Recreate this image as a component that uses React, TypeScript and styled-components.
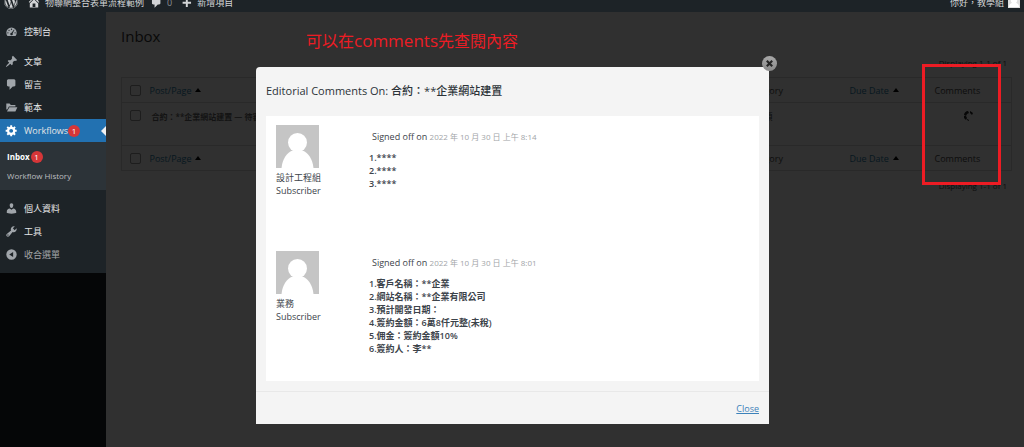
import React from 'react';
import styled, { createGlobalStyle } from 'styled-components';
import { FaWordpress } from 'react-icons/fa';

const GlobalStyle = createGlobalStyle`
  * { box-sizing: border-box; }
  body {
    margin: 0;
    background: #303030;
    color: #0d0d0d;
    font: 9px/13px "Open Sans", "Noto Sans CJK TC", sans-serif;
  }
  button, input { font: inherit; }
`;

const AdminBar = styled.header`
  display: flex;
  align-items: flex-end;
  height: 12px;
  padding: 0 4px;
  overflow: hidden;
  background: #1d2327;
  color: #d2d4d6;
`;

const BarItem = styled.a<{ $gap?: number; $end?: boolean }>`
  display: flex;
  align-items: center;
  flex: none;
  gap: 4px;
  height: 20px;
  margin-right: ${(p) => p.$gap ?? 8}px;
  margin-left: ${(p) => (p.$end ? 'auto' : '0')};
  color: inherit;
  text-decoration: none;
  white-space: nowrap;
`;

const Muted = styled.span`
  color: #8d9196;
`;

const Glyph = styled.svg<{ $size?: number }>`
  flex: none;
  width: ${(p) => p.$size ?? 13}px;
  height: ${(p) => p.$size ?? 13}px;
  fill: currentColor;
`;

const Layout = styled.div`
  display: flex;
  min-height: calc(100vh - 12px);
`;

const Sidebar = styled.nav`
  flex: none;
  width: 106px;
  background: #050607;
`;

const Menu = styled.ul`
  margin: 0;
  padding: 8px 0 7px;
  list-style: none;
  background: #1d2327;
`;

const MenuItem = styled.li<{ $spaced?: boolean }>`
  margin-top: ${(p) => (p.$spaced ? 7 : 0)}px;
`;

const MenuLink = styled.a<{ $active?: boolean; $quiet?: boolean }>`
  position: relative;
  display: flex;
  align-items: center;
  height: 23px;
  padding-left: 5px;
  gap: 6px;
  color: ${(p) => (p.$quiet ? '#a2a5a8' : '#e4e5e6')};
  background: ${(p) => (p.$active ? '#2271b1' : 'transparent')};
  text-decoration: none;
  white-space: nowrap;

  svg { color: ${(p) => (p.$active ? '#fff' : '#a0a5aa')}; }

  &::after {
    content: "";
    display: ${(p) => (p.$active ? 'block' : 'none')};
    position: absolute;
    right: 0;
    border: 5px solid transparent;
    border-right-color: #f0f0f1;
    border-left-width: 0;
  }
`;

const Label = styled.span`
  display: flex;
  align-items: center;
`;

const Count = styled.span`
  width: 12px;
  height: 12px;
  border-radius: 50%;
  background: #d63638;
  color: #fff;
  font-size: 8px;
  font-weight: 400;
  line-height: 12px;
  text-align: center;
`;

const SubMenu = styled.ul`
  margin: 0;
  padding: 5px 0 5px 7px;
  list-style: none;
  background: #2c3338;
`;

const SubLink = styled.a<{ $current?: boolean }>`
  display: flex;
  align-items: center;
  gap: 1px;
  height: 19px;
  font-size: 8px;
  color: ${(p) => (p.$current ? '#fff' : '#bcbfc1')};
  font-weight: ${(p) => (p.$current ? 700 : 400)};
  text-decoration: none;
`;

const Content = styled.main`
  flex: 1;
  min-width: 0;
  padding: 12px 12px 0 15px;
`;

const PageTitle = styled.h1`
  margin: 0;
  font-size: 15px;
  font-weight: 400;
  line-height: 24px;
  color: #090909;
`;

const Paging = styled.div`
  padding: 8px 5px;
  font-size: 8px;
  text-align: right;
`;

const InboxTable = styled.table`
  width: 100%;
  table-layout: fixed;
  border-collapse: collapse;
  border: 1px solid #292929;

  th, td {
    padding: 0;
    font-weight: 400;
    text-align: left;
    white-space: nowrap;
  }
  th { height: 25px; vertical-align: middle; }
  td { height: 43px; padding-top: 7px; vertical-align: top; }
  tr { border-bottom: 1px solid #292929; }
`;

const Tick = styled.input`
  display: block;
  appearance: none;
  width: 11px;
  height: 11px;
  margin: 0 0 0 8px;
  border: 1px solid #1d1d1d;
  border-radius: 2px;
`;

const SortLink = styled.a`
  display: inline-flex;
  align-items: center;
  gap: 4px;
  color: #07171f;
  text-decoration: none;

  &::after {
    content: "";
    border: 3px solid transparent;
    border-top-width: 0;
    border-bottom: 4px solid #000;
  }
`;

const PostTitle = styled.strong`
  padding-left: 2px;
  font-size: 8px;
  font-weight: 600;
  color: #131313;
`;

const Busy = styled(Glyph)`
  display: block;
  margin-left: 28px;
  color: #070707;
`;

const Note = styled.p`
  position: absolute;
  top: 29px;
  left: 306px;
  margin: 0;
  color: #ed1c24;
  font-size: 16px;
  line-height: 24px;
  white-space: nowrap;
`;

const NoteLatin = styled.span`
  font-size: 17px;
`;

const Marker = styled.div`
  position: absolute;
  top: 64px;
  right: 23px;
  width: 79px;
  height: 121px;
  border: 3px solid #ed1c24;
`;

const Dialog = styled.section`
  position: absolute;
  top: 67px;
  left: 25%;
  right: calc(25% - 1px);
  border-radius: 4px 4px 0 0;
  background: #f4f4f4;
  color: #3c434a;
`;

const DialogTitle = styled.h2`
  margin: 0;
  padding: 15px 10px 17px;
  color: #2c3338;
  font-size: 11px;
  font-weight: 500;
  line-height: 17px;
`;

const DismissButton = styled.button`
  position: absolute;
  top: -11px;
  right: -8px;
  display: grid;
  place-items: center;
  width: 15px;
  height: 15px;
  padding: 0;
  border: 0;
  border-radius: 50%;
  background: linear-gradient(#a8a8a8, #8a8a8a);
  color: #262626;
`;

const Comments = styled.div`
  margin: 0 10px;
  padding: 9px 10px 0;
  background: #fff;
`;

const Comment = styled.article<{ $last?: boolean }>`
  display: flex;
  gap: 49px;
  min-height: ${(p) => (p.$last ? 130 : 126)}px;
`;

const Author = styled.div`
  flex: none;
  width: 44px;
  white-space: nowrap;
`;

const Avatar = styled.svg`
  display: block;
  width: 43px;
  height: 43px;
  margin-bottom: 3px;
`;

const Signed = styled.p`
  margin: 0;
  padding: 5px 0 8px 3px;

  time {
    color: #a2a5a8;
    font-size: 8px;
  }
`;

const Lines = styled.div`
  font-weight: 600;
`;

const DialogFooter = styled.footer`
  margin-top: 10px;
  padding: 10px 10px 9px;
  border-top: 1px solid #e8e8e8;
  text-align: right;
  a { color: #3c82ba; }
`;

const paths = {
  home: 'M16 8.5l1.53 1.53-1.06 1.06L10 4.6l-6.47 6.49-1.06-1.06L10 2.5l4 4v-2h2v4zm-6-2.46l6 5.99V18H4v-5.97zM12 17v-5H8v5h4z',
  comment: 'M5 2h9q.82 0 1.41.59T16 4v7q0 .82-.59 1.41T14 13h-2l-5 5v-5H5q-.82 0-1.41-.59T3 11V4q0-.82.59-1.41T5 2z',
  plus: 'M17 9v3h-5v5H9v-5H4V9h5V4h3v5h5z',
  dashboard: 'M3.76 17h12.48A8 8 0 0 0 18 12a8 8 0 0 0-16 0c0 1.89.66 3.63 1.76 5zM10 5.5a1 1 0 1 1 0 2 1 1 0 0 1 0-2zM6.2 7.2a1 1 0 1 1 0 2 1 1 0 0 1 0-2zM4.5 11a1 1 0 1 1 0 2 1 1 0 0 1 0-2zM15.5 11a1 1 0 1 1 0 2 1 1 0 0 1 0-2zM13.9 7l.6.6-2.7 5.2a2 2 0 1 1-1.7-1z',
  pin: 'M10.44 3.02l1.82-1.82 6.36 6.35-1.83 1.82c-1.05-.68-2.48-.57-3.41.36l-.75.75c-.92.93-1.04 2.35-.35 3.41l-1.83 1.82-2.41-2.41-2.8 2.79c-.42.42-3.38 2.71-3.8 2.29s1.86-3.39 2.28-3.81l2.79-2.79L4.1 9.36l1.83-1.82c1.05.69 2.48.57 3.4-.36l.75-.75c.93-.92 1.05-2.35.36-3.41z',
  folder: 'M2 4h5l2 2h7v2.5H6L3.5 13H2zM6.8 9.8H19L16 16H3z',
  gear: 'M18 12h-2.18c-.17.7-.44 1.35-.81 1.93l1.54 1.54-2.1 2.1-1.54-1.54c-.58.36-1.23.63-1.91.79V19H8v-2.18c-.68-.16-1.33-.43-1.91-.79l-1.54 1.54-2.12-2.12 1.54-1.54c-.36-.58-.63-1.23-.79-1.91H1V9.03h2.17c.16-.7.44-1.35.8-1.94L2.43 5.55l2.1-2.1 1.54 1.54c.58-.37 1.24-.64 1.93-.81V2h3v2.18c.68.16 1.33.43 1.91.79l1.54-1.54 2.12 2.12-1.54 1.54c.36.59.64 1.24.8 1.94H18V12zm-8.5 1.5c1.66 0 3-1.34 3-3s-1.34-3-3-3-3 1.34-3 3 1.34 3 3 3z',
  user: 'M10 9.25c-2.27 0-2.73-3.44-2.73-3.44C7 4.02 7.82 2 9.97 2c2.16 0 2.98 2.02 2.71 3.81 0 0-.41 3.44-2.68 3.44zm0 2.57L12.72 10c2.39 0 4.52 2.33 4.52 4.53v2.49s-3.65 1.13-7.24 1.13c-3.65 0-7.24-1.13-7.24-1.13v-2.49c0-2.25 1.94-4.48 4.47-4.48z',
  tools: 'M16.68 9.77c-1.34 1.34-3.3 1.67-4.95.99l-5.41 6.52c-.99.99-2.59.99-3.58 0s-.99-2.59 0-3.57l6.52-5.42c-.68-1.65-.35-3.61.99-4.95 1.28-1.28 3.12-1.62 4.72-1.06l-2.89 2.89 2.82 2.82 2.86-2.87c.53 1.58.18 3.39-1.08 4.65zM3.81 16.21c.4.39 1.04.39 1.43 0 .4-.4.4-1.04 0-1.43-.39-.4-1.03-.4-1.43 0-.39.39-.39 1.03 0 1.43z',
  collapse: 'M10 2a8 8 0 1 1 0 16 8 8 0 0 1 0-16zM12.5 6L6.5 10l6 4z',
};

const Icon = ({ name, size }: { name: keyof typeof paths; size?: number }) => (
  <Glyph viewBox="0 0 20 20" $size={size} aria-hidden="true">
    <path fillRule="evenodd" d={paths[name]} />
  </Glyph>
);

const Portrait = () => (
  <Avatar viewBox="0 0 43 43" aria-hidden="true">
    <path fill="#c5c5c5" d="M0 0h43v43H0z" />
    <circle cx="21.5" cy="17.5" r="9.5" fill="#fff" />
    <path fill="#fff" d="M5.500 43c1-9 5-15 11-17.500h10c6 2.500 10 8.500 11 17.500z" />
  </Avatar>
);

const HeadingRow = () => (
  <tr>
    <th><Tick type="checkbox" aria-label="Select all" /></th>
    <th><SortLink href="#post">Post/Page</SortLink></th>
    <th>Category</th>
    <th><SortLink href="#due">Due Date</SortLink></th>
    <th>Comments</th>
  </tr>
);

const comments = [
  { author: '設計工程組', time: '2022 年 10 月 30 日 上午 8:14', lines: ['1.****', '2.****', '3.****'] },
  {
    author: '業務',
    time: '2022 年 10 月 30 日 上午 8:01',
    lines: ['1.客戶名稱：**企業', '2.網站名稱：**企業有限公司', '3.預計開發日期：', '4.簽約金額：6萬8仟元整(未稅)', '5.佣金：簽約金額10%', '6.簽約人：李**'],
  },
];

export default function App() {
  return (
    <>
      <GlobalStyle />
      <AdminBar>
        <BarItem href="#wp" $gap={9} aria-label="WordPress"><FaWordpress size={14} /></BarItem>
        <BarItem href="#site" $gap={6}><Icon name="home" size={14} />物聯網整合表單流程範例</BarItem>
        <BarItem href="#comments"><Icon name="comment" size={13} /><Muted>0</Muted></BarItem>
        <BarItem href="#new"><Icon name="plus" size={13} />新增項目</BarItem>
        <BarItem href="#me" $end $gap={0}>
          你好，教學組
          <Glyph viewBox="0 0 12 12" $size={12} aria-hidden="true">
            <path fill="#dedede" d="M0 0h12v12H0z" />
            <path fill="#fff" d="M1 11c0-3 2-4 3-4a3 3 0 1 1 4 0c1 0 3 1 3 4z" />
          </Glyph>
        </BarItem>
      </AdminBar>
      <Layout>
        <Sidebar>
          <Menu>
            <MenuItem><MenuLink href="#dashboard"><Icon name="dashboard" />控制台</MenuLink></MenuItem>
            <MenuItem $spaced><MenuLink href="#posts"><Icon name="pin" />文章</MenuLink></MenuItem>
            <MenuItem><MenuLink href="#replies"><Icon name="comment" />留言</MenuLink></MenuItem>
            <MenuItem><MenuLink href="#templates"><Icon name="folder" />範本</MenuLink></MenuItem>
            <MenuItem>
              <MenuLink href="#workflows" $active><Icon name="gear" /><Label>Workflows<Count>1</Count></Label></MenuLink>
              <SubMenu>
                <li><SubLink href="#inbox" $current>Inbox<Count>1</Count></SubLink></li>
                <li><SubLink href="#history">Workflow History</SubLink></li>
              </SubMenu>
            </MenuItem>
            <MenuItem $spaced><MenuLink href="#profile"><Icon name="user" />個人資料</MenuLink></MenuItem>
            <MenuItem><MenuLink href="#tools"><Icon name="tools" />工具</MenuLink></MenuItem>
            <MenuItem><MenuLink href="#collapse" $quiet><Icon name="collapse" />收合選單</MenuLink></MenuItem>
          </Menu>
        </Sidebar>
        <Content>
          <PageTitle>Inbox</PageTitle>
          <Paging>Displaying 1-1 of 1</Paging>
          <InboxTable>
            <colgroup>
              <col style={{ width: '28px' }} />
              <col />
              <col style={{ width: '104px' }} />
              <col style={{ width: '85px' }} />
              <col style={{ width: '77px' }} />
            </colgroup>
            <thead><HeadingRow /></thead>
            <tbody>
              <tr>
                <td><Tick type="checkbox" aria-label="Select post" /></td>
                <td><PostTitle>合約：**企業網站建置 — 待審</PostTitle></td>
                <td>未分類</td>
                <td />
                <td>
                  <Busy viewBox="0 0 12 12" $size={12} aria-label="Loading">
                    <path d="M5 1l1 2-2 1-1 2-2-1c0-2 2-4 4-4zM7 1l3 2-1 2-2-2zM1 6h2l1 2-1 2-2-2zM4 9l2 1v1l-2-1z" />
                  </Busy>
                </td>
              </tr>
            </tbody>
            <tfoot><HeadingRow /></tfoot>
          </InboxTable>
          <Paging>Displaying 1-1 of 1</Paging>
        </Content>
      </Layout>
      <Note>可以在<NoteLatin>comments</NoteLatin>先查閱內容</Note>
      <Marker />
      <Dialog role="dialog" aria-labelledby="dialog-title">
        <DialogTitle id="dialog-title">Editorial Comments On: 合約：**企業網站建置</DialogTitle>
        <DismissButton type="button" aria-label="Close dialog">
          <Glyph viewBox="0 0 10 10" $size={9}>
            <path d="M2 2l6 6M8 2L2 8" stroke="currentColor" strokeWidth="2.4" />
          </Glyph>
        </DismissButton>
        <Comments>
          {comments.map((c, i) => (
            <Comment key={c.author} $last={i === comments.length - 1}>
              <Author><Portrait />{c.author}<br />Subscriber</Author>
              <div>
                <Signed>Signed off on <time>{c.time}</time></Signed>
                <Lines>{c.lines.map((line) => <div key={line}>{line}</div>)}</Lines>
              </div>
            </Comment>
          ))}
        </Comments>
        <DialogFooter><a href="#close">Close</a></DialogFooter>
      </Dialog>
    </>
  );
}
